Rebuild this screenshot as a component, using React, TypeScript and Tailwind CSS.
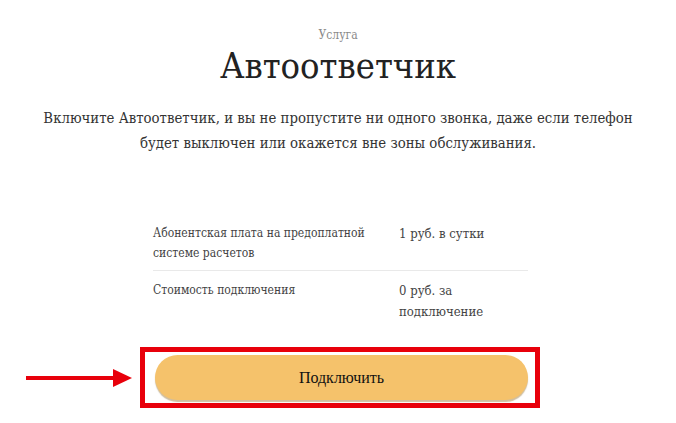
import React from 'react';

const rows = [
  { label: ['Абонентская плата на предоплатной', 'системе расчетов'], value: ['1 руб. в сутки'] },
  { label: ['Стоимость подключения'], value: ['0 руб. за', 'подключение'] },
];

function Arrow() {
  return (
    <svg width="106" height="20" viewBox="0 0 106 20" className="shrink-0">
      <rect x="0" y="8" width="88" height="4" fill="#e8000b" />
      <polygon points="87,1 106,10 87,19" fill="#e8000b" />
    </svg>
  );
}

export default function App() {
  return (
    <div className="w-[676px] h-[423px] bg-white overflow-hidden font-['DejaVu_Serif',serif] [font-stretch:condensed]">
      <div className="flex flex-col items-center">
        <div className="mt-[27px] text-[12px] leading-[16px] text-[#8a8a8a]">Услуга</div>
        <h1 className="mt-[1px] text-[36px] leading-[44px] text-[#222]">Автоответчик</h1>
        <p className="mt-[17px] w-[620px] text-center text-[14.8px] leading-[25px] text-[#333]">
          Включите Автоответчик, и вы не пропустите ни одного звонка, даже если телефон будет выключен или окажется вне
          зоны обслуживания.
        </p>
      </div>

      <div className="ml-[153px] mt-[68px] w-[375px]">
        {rows.map((row, i) => (
          <div
            key={i}
            className={
              'flex ' + (i === 0 ? 'pb-[7px] border-b border-[#e9e9e9]' : 'pt-[9px]')
            }
          >
            <div className="w-[246px] text-[12px] leading-[20px] text-[#444]">
              {row.label.map((l) => (
                <div key={l}>{l}</div>
              ))}
            </div>
            <div className="text-[13px] leading-[21px] text-[#444]">
              {row.value.map((v) => (
                <div key={v}>{v}</div>
              ))}
            </div>
          </div>
        ))}
      </div>

      <div className="mt-[25px] flex items-center">
        <div className="ml-[26px] mr-[8px]">
          <Arrow />
        </div>
        <div className="border-[5px] border-[#e8000b] pl-[10px] pr-[7px] pt-[3px] pb-[3px]">
          <button className="w-[373px] h-[45px] rounded-full bg-[#f5c26b] shadow-[0_2px_1px_rgba(150,110,40,0.45)] font-['Liberation_Serif',serif] [font-stretch:normal] text-[16px] text-[#111]">
            Подключить
          </button>
        </div>
      </div>
    </div>
  );
}
